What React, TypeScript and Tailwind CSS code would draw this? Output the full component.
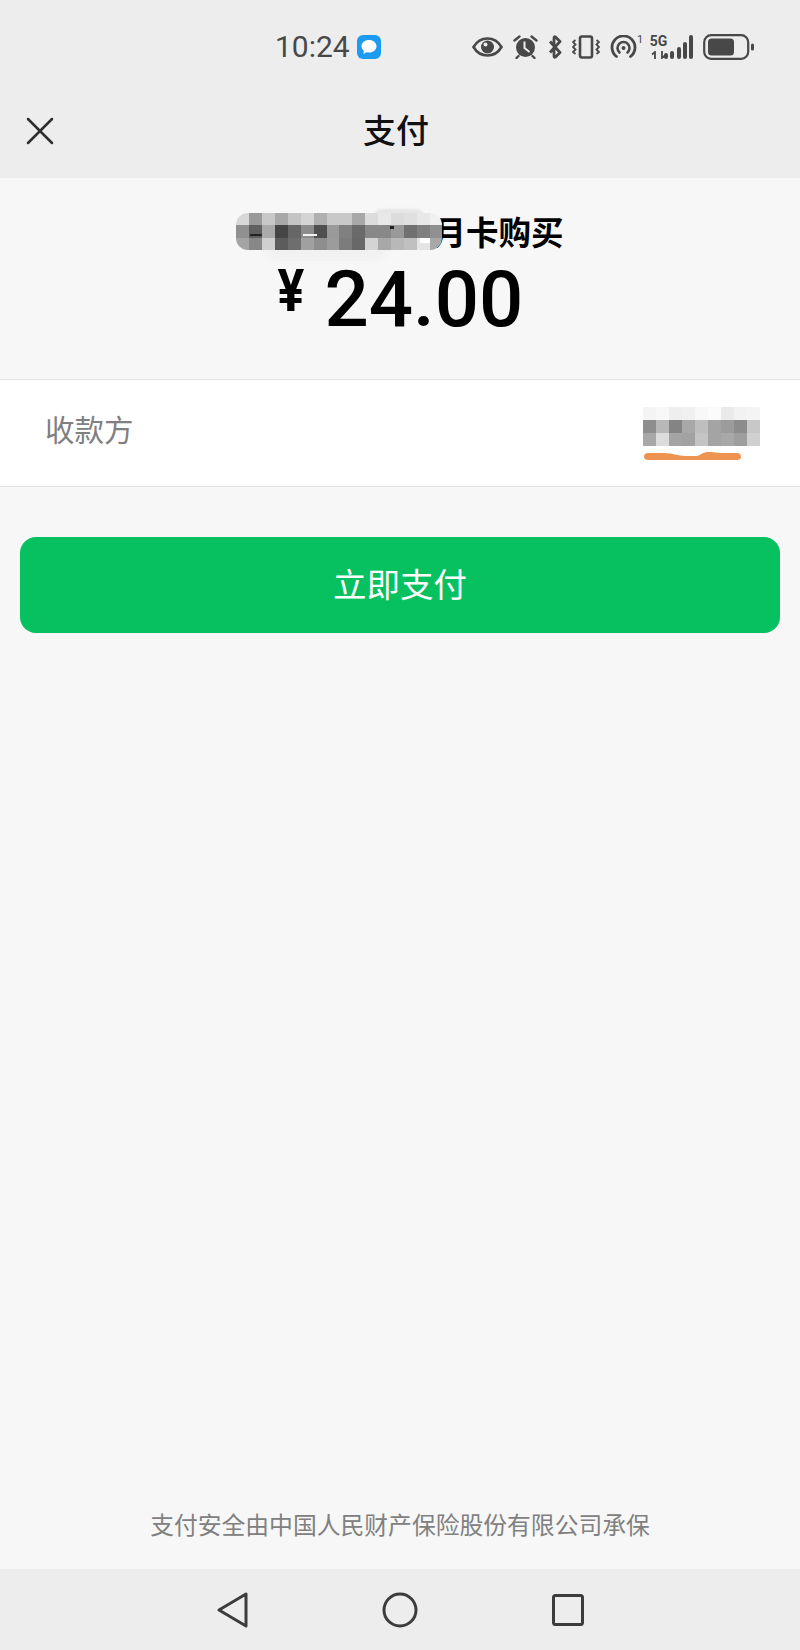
const titleCells = [
  ["#d8d8d8", "#9a9a9a", "#c8c8c8", "#a8a8a8", "#c4c4c4", "#d4d4d4", "#b0b0b0", "#c8c8c8", "#c8c8c8", "#a8a8a8", "#dcdcdc", "#e8e8e8", "#dcdcdc", "#e0e0e0", "#e8e8e8", "#f0f0f0"],
  ["#909090", "#606060", "#aaaaaa", "#454545", "#666666", "#8c8c8c", "#505050", "#9a9a9a", "#808080", "#6a6a6a", "#888888", "#888888", "#999999", "#707070", "#808080", "#909090"],
  ["#a4a4a4", "#888888", "#d0d0d0", "#5c5c5c", "#6e6e6e", "#a0a0a0", "#8e8e8e", "#9c9c9c", "#7c7c7c", "#686868", "#d4d4d4", "#a8a8a8", "#b8b8b8", "#c0c0c0", "#e4e4e4", "#a8a8a8"],
];

const payeeCells = [
  ["#f4f4f4", "#f8f8f8", "#eeeeee", "#f0f0f0", "#f8f8f8", "#fbfbfb", "#eaeaea", "#f2f2f2", "#f4f4f4"],
  ["#8e8e8e", "#b8b8b8", "#848484", "#a8a8a8", "#bebebe", "#a4a4a4", "#9c9c9c", "#8c8c8c", "#c8c8c8"],
  ["#a8a8a8", "#dcdcdc", "#a4a4a4", "#a2a2a2", "#c4c4c4", "#a4a4a4", "#a8a8a8", "#9e9e9e", "#d0d0d0"],
];

function Mosaic({ cells, width, height }: { cells: string[][]; width: number; height: number }) {
  return (
    <div className="flex flex-col blur-[0.5px]">
      {cells.map((row, r) => (
        <div key={r} className="flex">
          {row.map((color, c) => (
            <div key={c} style={{ width, height, backgroundColor: color }} />
          ))}
        </div>
      ))}
    </div>
  );
}

function StatusIcons() {
  const ink = "#484848";
  return (
    <div className="flex items-center">
      <svg width="31" height="20" viewBox="0 0 31 20" fill="none">
        <path d="M1.500 10C5 4 9.500 1.500 15.500 1.500S26 4 29.500 10C26 16 21.500 18.500 15.500 18.500S5 16 1.500 10Z" stroke={ink} strokeWidth="2.600" />
        <circle cx="15.500" cy="10" r="6.500" fill={ink} />
        <circle cx="13.500" cy="7.500" r="2" fill="#ededed" />
      </svg>
      <svg width="25" height="24" viewBox="0 0 25 24" fill="none" className="ml-[10px]">
        <circle cx="12.500" cy="12.500" r="9.500" fill={ink} />
        <path d="M11.500 6.500v6.500l5 4" stroke="#ededed" strokeWidth="2" />
        <path d="M1.500 5.500l5-4M23.500 5.500l-5-4M5.500 21l-2 2M19.500 21l2 2" stroke={ink} strokeWidth="2.400" strokeLinecap="round" />
      </svg>
      <svg width="15" height="24" viewBox="0 0 15 24" fill="none" className="ml-[10px]">
        <path d="M2 6.500l10 11-4.500 4.500c-1 .6-1.500 0-1.500-1V3c0-1 .5-1.600 1.500-1L12 6.500 2 17.500" stroke={ink} strokeWidth="2.800" strokeLinejoin="round" />
      </svg>
      <svg width="28" height="24" viewBox="0 0 28 24" fill="none" className="ml-[9px]">
        <rect x="8" y="1.500" width="12" height="21" rx="2" stroke={ink} strokeWidth="2.600" />
        <path d="M3.500 5L1 7l2.500 2.500L1 12l2.500 2.500L1 17l2.500 2M24.500 5L27 7l-2.500 2.500L27 12l-2.500 2.500L27 17l-2.500 2" stroke={ink} strokeWidth="1.800" />
      </svg>
      <svg width="27" height="24" viewBox="0 0 27 24" fill="none" className="ml-[10px]">
        <path d="M6.500 21.500a11.500 11.500 0 1 1 14 0" stroke={ink} strokeWidth="2.800" strokeLinecap="round" />
        <path d="M9.500 17.500a6 6 0 1 1 8 0" stroke={ink} strokeWidth="2.600" strokeLinecap="round" />
        <circle cx="13.500" cy="13" r="2" fill={ink} />
      </svg>
      <span className="mb-[14px] w-[6px] font-['Roboto',sans-serif] text-[11px] leading-[10px] text-[#484848]">1</span>
      <div className="ml-[7px] flex h-[24px] w-[17px] flex-col items-center justify-between">
        <span className="font-['Roboto',sans-serif] text-[14px] leading-[13px] font-bold text-[#484848]">5G</span>
        <svg width="16" height="8" viewBox="0 0 16 8" fill="none">
          <path d="M4 8V1L1 3.500M11 0v7l3-2.500" stroke={ink} strokeWidth="1.800" />
        </svg>
      </div>
      <svg width="29" height="24" viewBox="0 0 29 24" fill={ink} className="ml-[-3px]">
        <rect x="0" y="18" width="4" height="6" rx="2" />
        <rect x="6" y="16" width="4" height="8" rx="2" />
        <rect x="13" y="12" width="4" height="12" rx="2" />
        <rect x="19" y="7" width="4" height="17" rx="2" />
        <rect x="25" y="0" width="4" height="24" rx="2" />
      </svg>
      <svg width="51" height="26" viewBox="0 0 51 26" fill="none" className="ml-[10px]">
        <rect x="1.200" y="1.200" width="44" height="23.600" rx="7" stroke={ink} strokeWidth="2.200" />
        <rect x="5" y="4.500" width="26" height="17" rx="3.500" fill={ink} />
        <rect x="48" y="9.500" width="3" height="7" rx="1.500" fill={ink} />
      </svg>
    </div>
  );
}

export default function App() {
  return (
    <div className="flex h-[1650px] w-[800px] flex-col bg-[#f7f7f7] font-['Noto_Sans_CJK_SC','Noto_Sans',sans-serif]">
      <header className="h-[178px] shrink-0 bg-[#ededed]">
        <div className="flex h-[93px] items-center">
          <div className="ml-[275px] flex w-[197px] items-center gap-[7px]">
            <span className="font-['Roboto',sans-serif] text-[30px] text-[#484848]">10:24</span>
            <div className="flex h-[24px] w-[24px] items-center justify-center rounded-[6px] bg-[#1c9bf2]">
              <svg width="18" height="18" viewBox="0 0 18 18" fill="#ffffff">
                <path d="M9 2c4.200 0 7.500 2.700 7.500 6.300S13.200 14.600 9 14.600c-.9 0-1.700-.1-2.500-.3L3.500 16l.3-3.200C2.300 11.600 1.500 10 1.500 8.300 1.500 4.700 4.800 2 9 2Z" />
              </svg>
            </div>
          </div>
          <StatusIcons />
        </div>
        <div className="relative flex h-[85px] items-center justify-center pb-[11px]">
          <svg width="28" height="28" viewBox="0 0 28 28" fill="none" className="absolute top-[24px] left-[26px]">
            <path d="M2 2l24 24M26 2L2 26" stroke="#2e2e2e" strokeWidth="2.500" strokeLinecap="round" />
          </svg>
          <h1 className="mr-[8px] text-[33px] font-medium text-[#111111]">支付</h1>
        </div>
      </header>

      <section className="flex h-[201px] shrink-0 flex-col items-center pt-[30px]">
        <div className="flex h-[46px] items-center">
          <div className="relative z-10 mr-[-9px] mb-[-1px]">
            <div className="absolute top-[-4px] left-[138px] h-[16px] w-[50px] rounded-full bg-[#e6e6e6] blur-[1px]" />
            <div className="absolute top-[32px] left-[30px] h-[14px] w-[120px] rounded-full bg-[#f1f1f1] blur-[3px]" />
            <div className="relative overflow-hidden rounded-[12px]">
              <Mosaic cells={titleCells} width={12.875} height={12.300} />
              <div className="absolute top-[21px] left-[14px] h-[2px] w-[12px] bg-[#222222]" />
              <div className="absolute top-[21px] left-[67px] h-[2px] w-[14px] bg-[#f4f4f4]" />
              <div className="absolute top-[13px] left-[154px] h-[3px] w-[4px] bg-[#222222]" />
              <div className="absolute top-[25px] left-[184px] h-[5px] w-[10px] bg-white blur-[0.5px]" />
            </div>
          </div>
          <span className="text-[32.500px] font-bold text-black">月卡购买</span>
        </div>
        <div className="flex items-baseline gap-[20px] pl-[1px] font-['Roboto',sans-serif] text-black">
          <span className="-translate-y-[18px] scale-y-[1.2] text-[50px] leading-none font-bold">¥</span>
          <span className="text-[78px] leading-[92px] font-medium">24.00</span>
        </div>
      </section>

      <div className="flex h-[108px] shrink-0 items-center justify-between border-y border-[#e2e2e2] bg-white pr-[40px] pl-[45px]">
        <span className="pb-[10px] text-[29.500px] text-[#808080]">收款方</span>
        <div className="flex flex-col">
          <Mosaic cells={payeeCells} width={13} height={13} />
          <svg width="97" height="8" viewBox="0 0 97 8" fill="#ef9450" className="mt-[6px] ml-[1px]">
            <path d="M4 1h16c8 0 14 3 22 3h10c4 0 6-4 12-4h4c2 0 4 1 8 1h17c2.500 0 4 1.500 4 3.500S95.500 8 93 8H4C1.500 8 0 6.500 0 4.500S1.500 1 4 1Z" />
          </svg>
        </div>
      </div>

      <button type="button" className="mx-[20px] mt-[50px] flex h-[96px] shrink-0 items-center justify-center rounded-[16px] bg-[#07c160] pb-[3px] text-[33.500px] text-white">
        立即支付
      </button>

      <p className="mt-auto mb-[27px] text-center text-[23.800px] text-[#808080]">支付安全由中国人民财产保险股份有限公司承保</p>

      <nav className="flex h-[81px] shrink-0 items-center justify-center gap-[134px] bg-[#ededed]">
        <svg width="31" height="36" viewBox="0 0 31 36" fill="none">
          <path d="M29 2v32L2 18Z" stroke="#3c3c3c" strokeWidth="3" strokeLinejoin="round" />
        </svg>
        <svg width="36" height="36" viewBox="0 0 36 36" fill="none">
          <circle cx="18" cy="18" r="16" stroke="#3c3c3c" strokeWidth="3" />
        </svg>
        <svg width="32" height="32" viewBox="0 0 32 32" fill="none">
          <rect x="1.500" y="1.500" width="29" height="29" rx="2" stroke="#3c3c3c" strokeWidth="3" />
        </svg>
      </nav>
    </div>
  );
}
